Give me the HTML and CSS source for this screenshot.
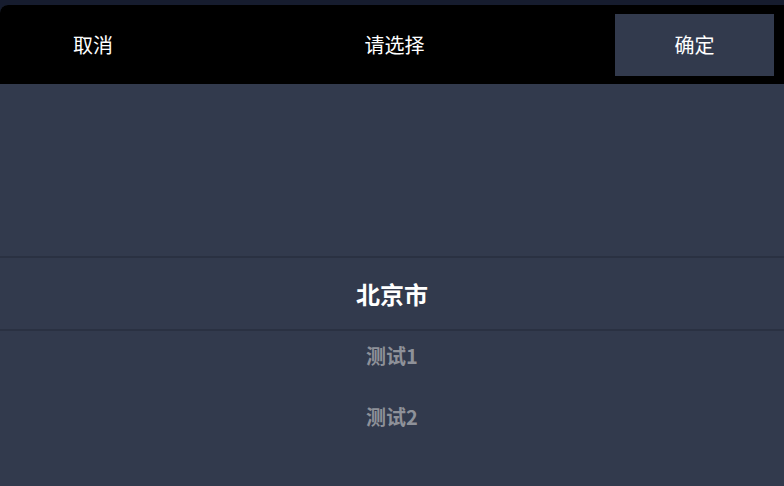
FILE: index.html
```html
<!DOCTYPE html>
<html lang="zh">
<head>
    <meta charset="UTF-8">
    <meta name="viewport" content="width=device-width, initial-scale=1.0">
    <title>请选择</title>
    <link rel="stylesheet" href="styles.css">
</head>
<body>
    <div class="sheet">
        <div class="toolbar">
            <div class="btn-cancel">取消</div>
            <div class="title">请选择</div>
            <div class="btn-confirm">确定</div>
        </div>
        <div class="picker">
            <div class="indicator">北京市</div>
            <div class="item">测试1</div>
            <div class="item">测试2</div>
        </div>
    </div>
</body>
</html>
```

FILE: styles.css
```css
body {
    margin: 0;
    background-color: #161c2e;
    font-family: "Noto Sans CJK SC", "Noto Sans", sans-serif;
    overflow: hidden;
}

.sheet {
    margin-top: 5px;
    height: 481px;
    background-color: #323a4d;
    border-radius: 8px 0 0 0;
    overflow: hidden;
}

.toolbar {
    height: 79px;
    background-color: #000;
    display: flex;
    align-items: center;
    color: #fff;
    font-size: 20px;
}

.btn-cancel {
    width: 186px;
    text-align: center;
}

.title {
    flex: 1;
    text-align: center;
    padding-right: 12px;
}

.btn-confirm {
    width: 159px;
    height: 62px;
    margin-right: 10px;
    background-color: #323a4d;
    display: flex;
    align-items: center;
    justify-content: center;
}

.picker {
    padding-top: 172px;
    text-align: center;
}

.indicator {
    height: 71px;
    line-height: 71px;
    border-top: 2px solid #2a3142;
    border-bottom: 2px solid #2a3142;
    color: #fff;
    font-size: 24px;
    font-weight: bold;
}

.item {
    height: 61px;
    line-height: 50px;
    color: #8e9199;
    font-size: 20px;
    font-weight: bold;
}
```
